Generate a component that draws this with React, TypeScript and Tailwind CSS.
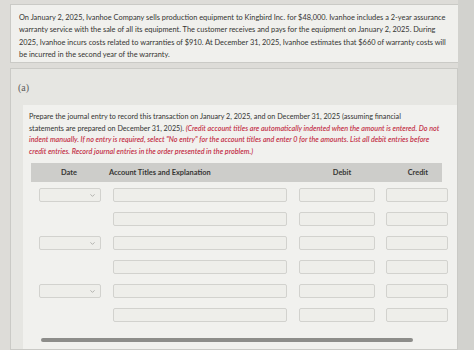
import { ChevronDown } from "lucide-react";

const rows = [true, false, true, false, true, false];

const Box = ({ className }: { className: string }) => (
  <div className={`h-[14px] rounded-[2px] border border-[#d2d2ce] bg-[#eeeeea] ${className}`} />
);

const DateSelect = () => (
  <div className="flex h-[14px] w-[62px] items-center justify-end rounded-[2px] border border-[#d2d2ce] bg-[#eeeeea] pr-[4px]">
    <ChevronDown size={7} strokeWidth={2.5} className="text-[#9a9a96]" />
  </div>
);

const App = () => {
  return (
    <div className="h-[350px] w-[474px] overflow-hidden bg-[#dddcd8] font-['Lato',sans-serif] text-[#343432]">
      <div className="flex h-full">
        <div className="flex w-[458px] flex-col pl-[10px] pt-[4px]">
          <div className="h-[59px] w-[450px] border border-[#cacac6] bg-[#f0f0ed] pl-[8px] pt-[7px] text-[7.4px] leading-[12.3px]">
            On January 2, 2025, Ivanhoe Company sells production equipment to Kingbird Inc. for $48,000. Ivanhoe includes a 2-year assurance
            <br />
            warranty service with the sale of all its equipment. The customer receives and pays for the equipment on January 2, 2025. During
            <br />
            2025, Ivanhoe incurs costs related to warranties of $910. At December 31, 2025, Ivanhoe estimates that $660 of warranty costs will
            <br />
            be incurred in the second year of the warranty.
          </div>

          <div className="mt-[5px] flex flex-1 flex-col border border-[#cacac6] bg-[#e6e6e2]">
            <div className="flex h-[36px] items-center pl-[7px] font-['Liberation_Serif',serif] text-[10px] text-[#5c5c5a]">
              (a)
            </div>
            <div className="ml-[12px] flex flex-1 flex-col bg-[#f1f1ee] pl-[6px] pt-[6px]">
              <div className="text-[7.2px] leading-[11.5px]">
                Prepare the journal entry to record this transaction on January 2, 2025, and on December 31, 2025 (assuming financial
                <br />
                statements are prepared on December 31, 2025).{" "}
                <span className="italic font-semibold text-[#c4344a]">
                  (Credit account titles are automatically indented when the amount is entered. Do not
                  <br />
                  indent manually. If no entry is required, select "No entry" for the account titles and enter 0 for the amounts. List all debit entries before
                  <br />
                  credit entries. Record journal entries in the order presented in the problem.)
                </span>
              </div>

              <div className="mt-[6px] ml-[2px] flex h-[19px] w-[411px] items-center bg-[#cdcdca] text-[7.4px] font-bold text-[#363634]">
                <div className="w-[76px] text-center">Date</div>
                <div className="w-[190px] pl-[2px]">Account Titles and Explanation</div>
                <div className="w-[76px] pl-[14px] text-center">Debit</div>
                <div className="flex-1 pr-[14px] text-right">Credit</div>
              </div>

              <div className="mt-[6px] flex flex-col gap-[10px]">
                {rows.map((hasDate, i) => (
                  <div key={i} className="flex items-center">
                    <div className="ml-[10px] w-[74px]">{hasDate && <DateSelect />}</div>
                    <Box className="w-[174px]" />
                    <Box className="ml-[12px] w-[76px]" />
                    <Box className="ml-[11px] w-[62px]" />
                  </div>
                ))}
              </div>

              <div className="mt-[16px] ml-[12px] h-[4px] w-[372px] rounded-full bg-[#8d8d8a]" />
            </div>
          </div>
        </div>
        <div className="flex-1 bg-[#d2d2ce]" />
      </div>
    </div>
  );
};

export default App;
